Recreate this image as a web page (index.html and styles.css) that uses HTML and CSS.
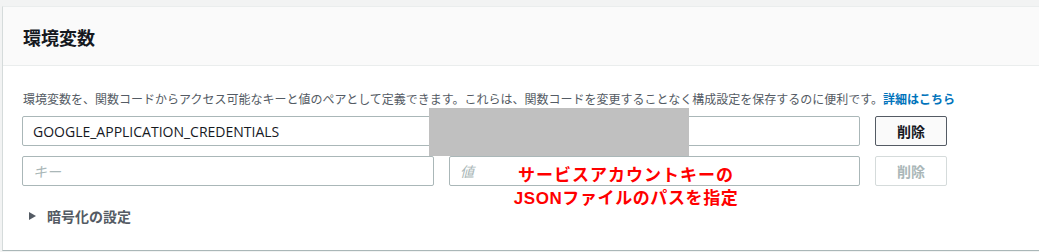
FILE: index.html
```html
<!DOCTYPE html>
<html lang="ja">
<head>
<meta charset="utf-8">
<title>環境変数</title>
<link rel="stylesheet" href="styles.css">
</head>
<body>
<div class="card">
  <div class="card-header">
    <h2 class="title">環境変数</h2>
  </div>
  <div class="card-body">
    <p class="desc">環境変数を、関数コードからアクセス可能なキーと値のペアとして定義できます。これらは、関数コードを変更することなく構成設定を保存するのに便利です。<a class="link" href="#">詳細はこちら</a></p>
    <div class="env-row">
      <input class="field" type="text" value="GOOGLE_APPLICATION_CREDENTIALS">
      <input class="field" type="text" value="">
      <button class="btn">削除</button>
    </div>
    <div class="env-row row-gap">
      <input class="field" type="text" placeholder="キー">
      <input class="field" type="text" placeholder="値">
      <button class="btn btn-disabled" disabled>削除</button>
    </div>
    <div class="expander">
      <span class="caret"></span>
      <span class="expander-label">暗号化の設定</span>
    </div>
  </div>
  <div class="redact"></div>
  <div class="annotation"><span class="line1">サービスアカウントキーの</span><br><span class="line2">JSONファイルのパスを指定</span></div>
</div>
</body>
</html>
```
FILE: styles.css
```css
html, body {
  margin: 0;
  padding: 0;
}
body {
  background: #f2f3f3;
  overflow: hidden;
  font-family: "Open Sans", "Noto Sans CJK JP", sans-serif;
  color: #16191f;
}
.card {
  position: relative;
  margin: 6px -40px 0 2px;
  background: #ffffff;
  border-top: 1px solid #eaeded;
  border-left: 1px solid #d5dbdb;
  border-bottom: 1px solid #aab7b8;
}
.card-header {
  height: 58px;
  background: #fafafa;
  border-bottom: 1px solid #eaeded;
  display: flex;
  align-items: center;
  padding: 0 20px;
}
.title {
  margin: 0;
  font-family: "Noto Sans CJK JP", sans-serif;
  font-size: 18px;
  font-weight: 700;
  line-height: 22px;
  color: #16191f;
  padding-top: 1px;
}
.card-body {
  padding: 24px 19px 24px 19px;
  height: 136px;
}
.desc {
  margin: 0 0 0 1px;
  font-family: "Noto Sans CJK JP", sans-serif;
  font-size: 12px;
  line-height: 18px;
  color: #545b64;
  white-space: nowrap;
}
.link {
  color: #0073bb;
  font-weight: 700;
  text-decoration: none;
}
.env-row {
  display: grid;
  grid-template-columns: 412px 411px 72px;
  column-gap: 15px;
  margin-top: 8px;
  height: 30px;
}
.env-row.row-gap {
  margin-top: 10px;
}
.field {
  box-sizing: border-box;
  height: 30px;
  width: 100%;
  margin: 0;
  border: 1px solid #aab7b8;
  border-radius: 2px;
  padding: 0 10px;
  font-family: "Open Sans", "Noto Sans CJK JP", sans-serif;
  font-size: 14px;
  color: #16191f;
  background: #ffffff;
  outline: none;
}
.field::placeholder {
  color: #aab7b8;
  font-style: italic;
}
.btn {
  box-sizing: border-box;
  height: 30px;
  width: 72px;
  margin: 0;
  padding: 0;
  border: 1px solid #545b64;
  border-radius: 2px;
  background: #fafafa;
  font-family: "Noto Sans CJK JP", sans-serif;
  font-size: 14px;
  font-weight: 700;
  color: #16191f;
}
.btn-disabled {
  border-color: #d5dbdb;
  background: #ffffff;
  color: #aab7b8;
}
.expander {
  margin-top: 20px;
  height: 20px;
  display: flex;
  align-items: center;
  padding-left: 7px;
}
.caret {
  width: 0;
  height: 0;
  border-top: 4px solid transparent;
  border-bottom: 4px solid transparent;
  border-left: 7px solid #545b64;
  margin-right: 11px;
}
.expander-label {
  font-family: "Noto Sans CJK JP", sans-serif;
  font-size: 14px;
  font-weight: 700;
  line-height: 20px;
  color: #545b64;
}
.redact {
  position: absolute;
  left: 426px;
  top: 101px;
  width: 260px;
  height: 48px;
  background: #c0c0c0;
}
.annotation {
  position: absolute;
  left: 490px;
  top: 157px;
  width: 266px;
  text-align: center;
  font-family: "Liberation Sans", "Noto Sans CJK JP", sans-serif;
  font-size: 17px;
  font-weight: 700;
  line-height: 23px;
  color: #ff0000;
}
.line1 {
  letter-spacing: 1px;
}
.line2 {
  letter-spacing: 0.6px;
}
```
